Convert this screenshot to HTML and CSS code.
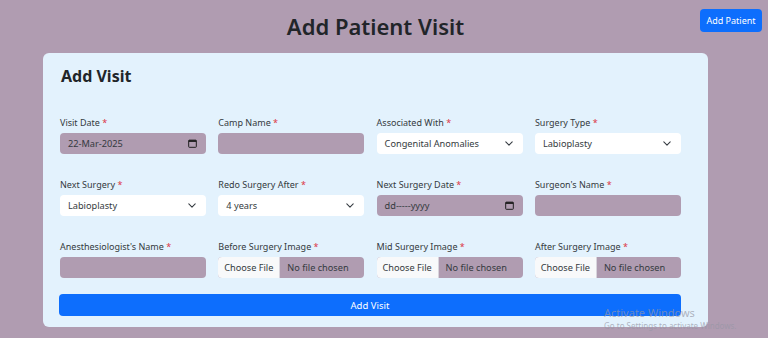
FILE: index.html
```html
<!DOCTYPE html>
<html lang="en">
<head>
<meta charset="utf-8">
<title>Add Patient Visit</title>
<link rel="stylesheet" href="styles.css">
</head>
<body>
<div class="page">
  <header class="top">
    <h1 class="title">Add Patient Visit</h1>
    <button class="btn add-patient" type="button">Add Patient</button>
  </header>

  <section class="card">
    <h2 class="card-title">Add Visit</h2>
    <form class="form-grid">
      <div class="field">
        <label class="lbl">Visit Date <span class="req">*</span></label>
        <div class="ctl ctl-fill">
          <span class="val">22-Mar-2025</span>
          <svg class="cal" viewBox="0 0 10 10" width="9" height="9"><rect x="0.75" y="1.25" width="8.5" height="8" rx="0.8" fill="none" stroke="#1e1e1e" stroke-width="1.1"/><rect x="0.75" y="1.25" width="8.5" height="2" fill="#1e1e1e"/></svg>
        </div>
      </div>
      <div class="field">
        <label class="lbl">Camp Name <span class="req">*</span></label>
        <div class="ctl ctl-fill"></div>
      </div>
      <div class="field">
        <label class="lbl">Associated With <span class="req">*</span></label>
        <div class="ctl ctl-white">
          <span class="val">Congenital Anomalies</span>
          <svg class="chev" viewBox="0 0 10 6" width="8" height="5"><path d="M1 1l4 4 4-4" fill="none" stroke="#343a40" stroke-width="1.3" stroke-linecap="round" stroke-linejoin="round"/></svg>
        </div>
      </div>
      <div class="field">
        <label class="lbl">Surgery Type <span class="req">*</span></label>
        <div class="ctl ctl-white">
          <span class="val">Labioplasty</span>
          <svg class="chev" viewBox="0 0 10 6" width="8" height="5"><path d="M1 1l4 4 4-4" fill="none" stroke="#343a40" stroke-width="1.3" stroke-linecap="round" stroke-linejoin="round"/></svg>
        </div>
      </div>

      <div class="field">
        <label class="lbl">Next Surgery <span class="req">*</span></label>
        <div class="ctl ctl-white">
          <span class="val">Labioplasty</span>
          <svg class="chev" viewBox="0 0 10 6" width="8" height="5"><path d="M1 1l4 4 4-4" fill="none" stroke="#343a40" stroke-width="1.3" stroke-linecap="round" stroke-linejoin="round"/></svg>
        </div>
      </div>
      <div class="field">
        <label class="lbl">Redo Surgery After <span class="req">*</span></label>
        <div class="ctl ctl-white">
          <span class="val">4 years</span>
          <svg class="chev" viewBox="0 0 10 6" width="8" height="5"><path d="M1 1l4 4 4-4" fill="none" stroke="#343a40" stroke-width="1.3" stroke-linecap="round" stroke-linejoin="round"/></svg>
        </div>
      </div>
      <div class="field">
        <label class="lbl">Next Surgery Date <span class="req">*</span></label>
        <div class="ctl ctl-fill">
          <span class="val">dd-----yyyy</span>
          <svg class="cal" viewBox="0 0 10 10" width="9" height="9"><rect x="0.75" y="1.25" width="8.5" height="8" rx="0.8" fill="none" stroke="#1e1e1e" stroke-width="1.1"/><rect x="0.75" y="1.25" width="8.5" height="2" fill="#1e1e1e"/></svg>
        </div>
      </div>
      <div class="field">
        <label class="lbl">Surgeon's Name <span class="req">*</span></label>
        <div class="ctl ctl-fill"></div>
      </div>

      <div class="field">
        <label class="lbl">Anesthesiologist's Name <span class="req">*</span></label>
        <div class="ctl ctl-fill"></div>
      </div>
      <div class="field">
        <label class="lbl">Before Surgery Image <span class="req">*</span></label>
        <div class="ctl ctl-file"><span class="choose">Choose File</span><span class="nofile">No file chosen</span></div>
      </div>
      <div class="field">
        <label class="lbl">Mid Surgery Image <span class="req">*</span></label>
        <div class="ctl ctl-file"><span class="choose">Choose File</span><span class="nofile">No file chosen</span></div>
      </div>
      <div class="field">
        <label class="lbl">After Surgery Image <span class="req">*</span></label>
        <div class="ctl ctl-file"><span class="choose">Choose File</span><span class="nofile">No file chosen</span></div>
      </div>

      <button class="btn submit" type="button">Add Visit</button>
    </form>
  </section>

  <div class="watermark">
    <div class="wm-title">Activate Windows</div>
    <div class="wm-sub">Go to Settings to activate Windows.</div>
  </div>
</div>
</body>
</html>
```

FILE: styles.css
```css
* { box-sizing: border-box; }

html, body {
  margin: 0;
  height: 100%;
}

body {
  background: #b09cb1;
  font-family: "Noto Sans", "Open Sans", sans-serif;
  color: #212529;
  overflow: hidden;
}

.page {
  position: relative;
  width: 751px;
  height: 338px;
}

.top {
  display: flex;
  justify-content: center;
  padding-top: 10px;
}

.title {
  margin: 0;
  font-size: 22px;
  font-weight: 600;
  line-height: 33px;
  color: #212529;
}

.btn {
  font-family: inherit;
  border: none;
  color: #fff;
  background: #0d6efd;
  cursor: pointer;
}

.add-patient {
  position: absolute;
  top: 9px;
  left: 700px;
  width: 62px;
  height: 23px;
  border-radius: 4px;
  font-size: 9px;
  padding: 0;
}

.card {
  margin: 10px 43px 0 43px;
  background: #e3f2fd;
  border-radius: 6px;
  padding: 12px 26px 11px 16px;
  height: 274px;
}

.card-title {
  margin: 0 0 0 2px;
  font-size: 16px;
  font-weight: 700;
  line-height: 22px;
}

.form-grid {
  margin-top: 30px;
  display: grid;
  grid-template-columns: repeat(4, 146px);
  column-gap: 12.3px;
  row-gap: 25px;
  padding-left: 1px;
}

.field {
  display: flex;
  flex-direction: column;
  gap: 4px;
}

.lbl {
  font-size: 9px;
  line-height: 12px;
  color: #343a40;
}

.req { color: #dc3545; }

.ctl {
  height: 21px;
  border-radius: 4px;
  display: flex;
  align-items: center;
  justify-content: space-between;
  font-size: 9.2px;
  color: #343a40;
  padding: 0 8px;
  white-space: nowrap;
}

.ctl-fill { background: #b09cb1; }

.ctl-white { background: #ffffff; padding-right: 10px; }

.cal { flex: none; margin-right: 1px; }
.chev { flex: none; }

.ctl-file {
  background: #b09cb1;
  padding: 0;
  justify-content: flex-start;
  overflow: hidden;
}

.choose {
  flex: none;
  background: #f8f9fa;
  height: 100%;
  display: flex;
  align-items: center;
  justify-content: center;
  width: 62px;
  border-right: 1px solid #d8d4dc;
}

.nofile {
  padding-left: 7px;
}

.submit {
  grid-column: 1 / -1;
  margin-top: -9px;
  height: 22px;
  border-radius: 4px;
  font-size: 9.5px;
  margin-left: -1px;
}

.watermark {
  position: absolute;
  left: 604px;
  top: 305px;
  color: rgba(150, 150, 165, 0.7);
  pointer-events: none;
}

.wm-title {
  font-size: 11px;
  line-height: 15px;
}

.wm-sub {
  font-size: 8px;
  line-height: 11px;
  white-space: nowrap;
}
```
